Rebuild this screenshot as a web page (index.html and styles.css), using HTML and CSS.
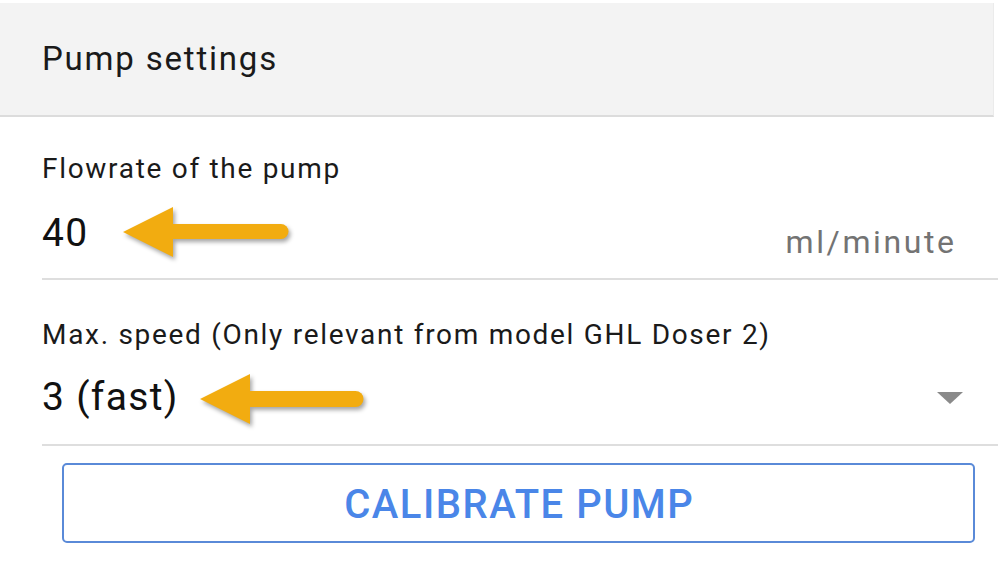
FILE: index.html
```html
<!DOCTYPE html>
<html lang="en">
<head>
<meta charset="utf-8">
<title>Pump settings</title>
<link rel="stylesheet" href="styles.css">
</head>
<body>
<div class="page">
  <header class="header">Pump settings</header>
  <section class="field field-first">
    <div class="label">Flowrate of the pump</div>
    <div class="value-row">
      <span class="value">40</span>
      <span class="unit">ml/minute</span>
      <svg class="arrow arrow-one" width="190" height="70" viewBox="0 0 190 70" aria-hidden="true">
        <g class="arrow-shape">
          <line x1="55" y1="32.5" x2="166" y2="32.5" stroke-width="15" stroke-linecap="round"/>
          <polygon points="8,33 58,8 58,58"/>
        </g>
      </svg>
    </div>
  </section>
  <section class="field field-second">
    <div class="label">Max. speed (Only relevant from model GHL Doser 2)</div>
    <div class="value-row">
      <span class="value">3 (fast)</span>
      <span class="caret"></span>
      <svg class="arrow arrow-two" width="190" height="70" viewBox="0 0 190 70" aria-hidden="true">
        <g class="arrow-shape">
          <line x1="55" y1="33" x2="163.5" y2="33" stroke-width="16" stroke-linecap="round"/>
          <polygon points="8,33 58,8 58,58"/>
        </g>
      </svg>
    </div>
  </section>
  <div class="actions">
    <button class="btn-outline" type="button">CALIBRATE PUMP</button>
  </div>
</div>
</body>
</html>
```

FILE: styles.css
```css
html, body {
  margin: 0;
  padding: 0;
  background: #ffffff;
}

body {
  font-family: Roboto, "Noto Sans", "Liberation Sans", sans-serif;
  color: #141414;
  width: 998px;
  height: 570px;
  overflow: hidden;
}

.page {
  padding-top: 3px;
}

.header {
  box-sizing: border-box;
  width: 994px;
  height: 114px;
  background: #f3f3f3;
  border-bottom: 2px solid #dcdcdc;
  border-right: 1px solid #ebebeb;
  display: flex;
  align-items: center;
  padding-left: 42px;
  font-size: 33px;
  line-height: 40px;
  letter-spacing: 1.8px;
  color: #1a1a1a;
}

.field {
  margin-left: 42px;
  border-bottom: 2px solid #dedede;
}

.field-first {
  padding-top: 36px;
  padding-bottom: 23px;
}

.field-second {
  padding-top: 39px;
  padding-bottom: 25px;
}

.label {
  font-size: 28px;
  line-height: 32px;
  letter-spacing: 1.7px;
  color: #1a1a1a;
}

.value-row {
  position: relative;
  display: flex;
  align-items: flex-end;
  justify-content: space-between;
  margin-top: 26px;
  padding-right: 44px;
}

.field-second .value-row {
  margin-top: 24px;
  align-items: center;
  padding-right: 35px;
}

.value {
  font-size: 39px;
  line-height: 44px;
  letter-spacing: 1.3px;
  color: #111111;
}

.unit {
  font-size: 32px;
  line-height: 26px;
  letter-spacing: 2.6px;
  margin-right: -2.6px;
  color: #737373;
}

.caret {
  width: 0;
  height: 0;
  border-left: 13px solid transparent;
  border-right: 13px solid transparent;
  border-top: 12px solid #8a8a8a;
  margin-top: 2px;
}

.arrow {
  position: absolute;
  overflow: visible;
}

.arrow-one {
  left: 73px;
  top: -12px;
}

.arrow-two {
  left: 150px;
  top: -9px;
}

.arrow-shape {
  fill: #f2ac10;
  stroke: #f2ac10;
  filter: drop-shadow(2px 3px 2px rgba(0, 0, 0, 0.35));
}

.arrow-shape polygon {
  stroke: none;
}

.actions {
  padding: 17px 23px 0 62px;
}

.btn-outline {
  box-sizing: border-box;
  width: 913px;
  height: 80px;
  border: 2px solid #5a8ad8;
  border-radius: 5px;
  background: #ffffff;
  color: #4a86e8;
  font-family: Roboto, "Noto Sans", "Liberation Sans", sans-serif;
  font-weight: 500;
  font-size: 40px;
  line-height: 44px;
  letter-spacing: 1.5px;
  padding: 4px 0 0 1.5px;
  display: block;
}
```
